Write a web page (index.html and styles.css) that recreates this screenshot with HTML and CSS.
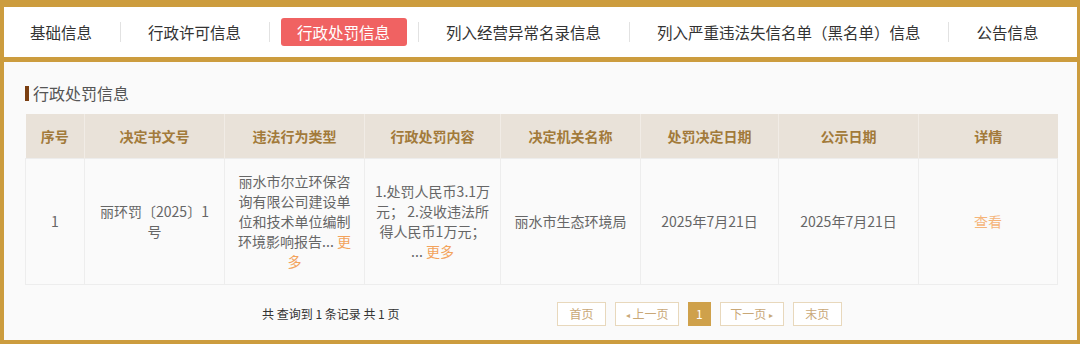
FILE: index.html
```html
<!DOCTYPE html>
<html lang="zh-CN">
<head>
  <meta charset="UTF-8" />
  <title>行政处罚信息</title>
  <link rel="stylesheet" href="styles.css">
</head>
<body>
  <div class="frame">
    <!-- 标签栏 -->
    <nav class="tabs">
      <a class="tab">基础信息</a>
      <span class="sep"></span>
      <a class="tab">行政许可信息</a>
      <span class="sep"></span>
      <a class="tab active">行政处罚信息</a>
      <span class="sep"></span>
      <a class="tab">列入经营异常名录信息</a>
      <span class="sep"></span>
      <a class="tab">列入严重违法失信名单（黑名单）信息</a>
      <span class="sep"></span>
      <a class="tab">公告信息</a>
    </nav>

    <!-- 行政处罚 -->
    <section class="panel">
      <h2 class="title">行政处罚信息</h2>
      <table class="grid">
        <colgroup>
          <col style="width:59px">
          <col style="width:140px">
          <col style="width:140px">
          <col style="width:136px">
          <col style="width:140px">
          <col style="width:138px">
          <col style="width:140px">
          <col style="width:139px">
        </colgroup>
        <thead>
          <tr>
            <th>序号</th>
            <th>决定书文号</th>
            <th>违法行为类型</th>
            <th>行政处罚内容</th>
            <th>决定机关名称</th>
            <th>处罚决定日期</th>
            <th>公示日期</th>
            <th>详情</th>
          </tr>
        </thead>
        <tbody>
          <tr>
            <td>1</td>
            <td>丽环罚〔2025〕1号</td>
            <td>丽水市尔立环保咨询有限公司建设单位和技术单位编制环境影响报告... <a class="more">更多</a></td>
            <td class="tight">1.处罚人民币3.1万<br>元； 2.没收违法所<br>得人民币1万元；<br>... <a class="more">更多</a></td>
            <td>丽水市生态环境局</td>
            <td>2025年7月21日</td>
            <td>2025年7月21日</td>
            <td><a class="view">查看</a></td>
          </tr>
        </tbody>
      </table>

      <div class="pager">
        <span class="count">共 查询到 1 条记录 共 1 页</span>
        <div class="pages">
          <a class="pg">首页</a>
          <a class="pg step"><i class="arr">◂</i>上一页</a>
          <a class="pg current">1</a>
          <a class="pg step">下一页<i class="arr right">▸</i></a>
          <a class="pg">末页</a>
        </div>
      </div>
    </section>
  </div>
</body>
</html>
```

FILE: styles.css
```css
* {
  box-sizing: border-box;
  margin: 0;
  padding: 0;
}

body {
  font-family: "Noto Sans CJK SC", "Noto Sans", sans-serif;
  background: #cc9c3e;
  color: #333;
}

.frame {
  width: 1080px;
  height: 344px;
  padding: 7px 3px 4px 4px;
  background: #cc9c3e;
  display: flex;
  flex-direction: column;
  gap: 5px;
}

.tabs {
  background: #fff;
  height: 50px;
  display: flex;
  align-items: center;
  padding-left: 10.5px;
}

.tab {
  font-size: 15.5px;
  color: #333;
  padding: 0 15.5px;
  height: 28px;
  line-height: 28px;
  border-radius: 3px;
  white-space: nowrap;
}

.tab.active {
  background: #f06262;
  color: #fff;
  padding: 0 16.5px;
  margin: 0 -1px;
}

.sep {
  width: 1px;
  height: 20px;
  background: #e2e2e2;
  margin: 0 12px;
}

.panel {
  flex: 1;
  background: #fafafa;
  padding: 20px 19px 0 21px;
}

.title {
  font-size: 16px;
  font-weight: normal;
  color: #555;
  line-height: 22px;
  margin-bottom: 10px;
  display: flex;
  align-items: center;
}

.title::before {
  content: "";
  width: 4px;
  height: 15px;
  background: #7b3f12;
  margin-right: 4px;
}

.grid {
  width: 1032px;
  table-layout: fixed;
  border-collapse: collapse;
  font-size: 14px;
}

.grid th {
  background: #e9e2d9;
  color: #a27a3a;
  font-weight: bold;
  height: 44px;
  border-left: 1px solid #f1ece6;
}

.grid td {
  height: 126px;
  padding: 0 12px;
  text-align: center;
  color: #666;
  line-height: 20px;
  background: #fafafa;
  border: 1px solid #ededed;
}

.grid td.tight {
  padding: 0 2px;
}

.grid th:first-child {
  border-left: none;
}

.more {
  color: #f3a35c;
}

.view {
  color: #f5b57a;
}

.pager {
  display: flex;
  align-items: center;
  margin-top: 17px;
  padding-left: 237px;
}

.count {
  font-size: 12px;
  color: #333;
  width: 295px;
}

.pages {
  display: flex;
  gap: 9px;
}

.pg {
  height: 24px;
  line-height: 22px;
  padding: 0 11.5px;
  border: 1px solid #e8d8bc;
  background: #fff;
  color: #c9a877;
  font-size: 12px;
}

.pg.step {
  padding: 0 9.5px;
}

.pg.current {
  background: #cfa14b;
  border-color: #cfa14b;
  color: #fff;
  padding: 0 7px;
}

.arr {
  font-style: normal;
  font-size: 8px;
  margin-right: 3px;
  vertical-align: 1px;
}

.arr.right {
  margin: 0 0 0 3px;
}
```
